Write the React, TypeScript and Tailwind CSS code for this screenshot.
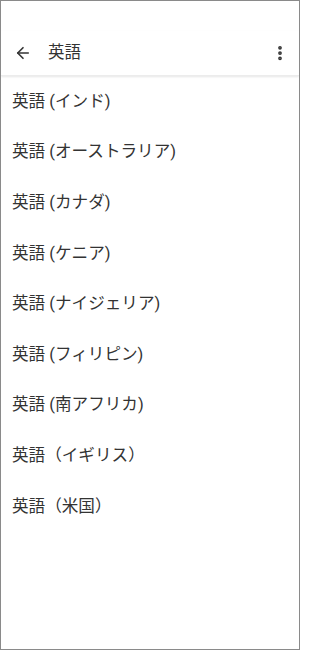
import { ArrowLeft, EllipsisVertical } from 'lucide-react'

const languages = [
    '英語 (インド)',
    '英語 (オーストラリア)',
    '英語 (カナダ)',
    '英語 (ケニア)',
    '英語 (ナイジェリア)',
    '英語 (フィリピン)',
    '英語 (南アフリカ)',
    '英語（イギリス）',
    '英語（米国）',
]

export default function App() {
    return (
        <div
            className="w-[300px] h-[650px] bg-white border border-[#8a8a8a] flex flex-col overflow-hidden text-[#333333]"
            style={{ fontFamily: 'Roboto, "Noto Sans CJK JP", sans-serif' }}
        >
            <div className="h-[30px] shrink-0" />
            <div className="h-[45px] shrink-0 flex items-center pl-[13px] pr-[10px] shadow-[0_1px_2px_rgba(0,0,0,0.1)] border-b border-[#ececec]">
                <ArrowLeft className="w-[18px] h-[18px]" strokeWidth={2.2} />
                <span className="ml-[16px] text-[16.5px] flex-1">英語</span>
                <EllipsisVertical className="w-[18px] h-[18px]" strokeWidth={3} />
            </div>
            <ul className="flex flex-col pt-[1px]">
                {languages.map((name) => (
                    <li key={name} className="h-[50.6px] flex items-center pl-[11px] text-[16.6px]">
                        {name}
                    </li>
                ))}
            </ul>
        </div>
    )
}
